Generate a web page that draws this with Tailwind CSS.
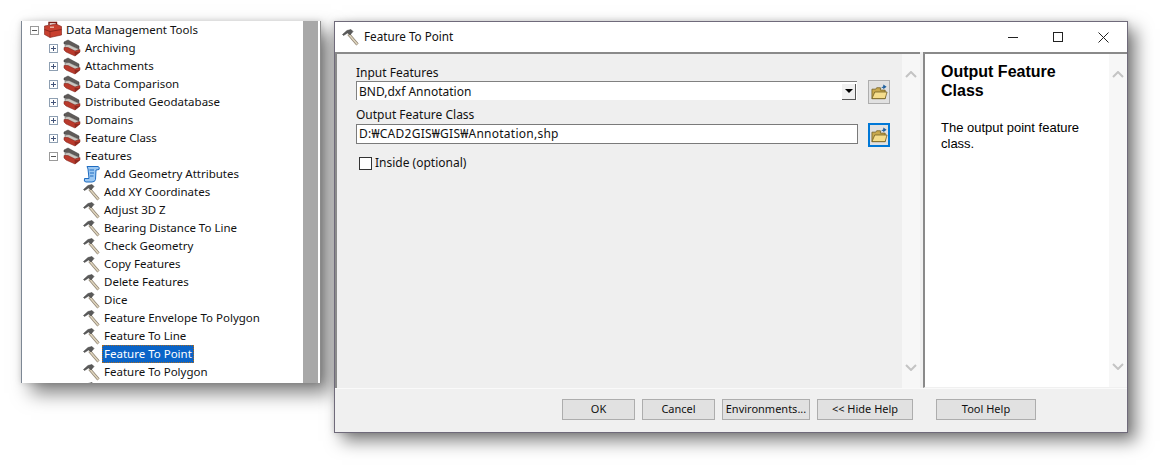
<!DOCTYPE html>
<html lang="en">
<head>
    <meta charset="UTF-8">
    <title>Feature To Point</title>
    <script src="https://cdn.jsdelivr.net/npm/@tailwindcss/browser@4"></script>
</head>
<body class="bg-white w-[1170px] h-[475px] overflow-hidden font-['Noto_Sans',sans-serif] text-[12px] text-[#111]">
    <!-- shared icons -->
    <svg class="hidden">
        <symbol id="hammer" viewBox="0 0 18 18">
            <path d="M6.5 6 L15.5 16.5" stroke="#8f8474" stroke-width="3" fill="none"/>
            <path d="M6.5 6 L15.5 16.5" stroke="#e0d6be" stroke-width="1.5" fill="none"/>
            <path d="M.5 6.5 L5 2.5 L9 1.5 L11 3.5 L8 7 L5.5 5 L1.5 7.5 Z" fill="#5a5a5a" stroke="#3c3c3c" stroke-width=".5"/>
        </symbol>
        <symbol id="toolset" viewBox="0 0 18 18">
            <path d="M1 3 L5 1 L16 7 L16 10 L6 6 L1 5 Z" fill="#5f5a58" stroke="#3a3a3a" stroke-width=".5"/>
            <path d="M2 6 L6 5.5 L16 10.5 L12 12.5 L2 8.5 Z" fill="#c9c6c0" stroke="#555" stroke-width=".5"/>
            <path d="M1 8.5 L5 8.5 L12 12 L17 10.5 L17 13 L12 17 L3 13 L1 11 Z" fill="#b93a2c" stroke="#7c1f16" stroke-width=".5"/>
            <path d="M11.5 13 L12 17 L17 13" fill="#8f2a20"/>
        </symbol>
        <symbol id="toolbox" viewBox="0 0 18 18">
            <path d="M5 4 V1.5 H12.5 V4" fill="none" stroke="#7c1f16" stroke-width="1.4"/>
            <path d="M.5 5 L12 3 L17.5 5.5 L17.5 14 L6 16.5 L.5 13.5 Z" fill="#c8402f" stroke="#7c1f16" stroke-width=".6"/>
            <path d="M.5 8.5 L6 10.5 L17.5 8.5" fill="none" stroke="#7c1f16" stroke-width=".8"/>
            <path d="M6 5.5 H10 V7 H6 Z" fill="#e8b0a0"/>
            <path d="M6 10.5 V16.5" stroke="#8f2a20" stroke-width=".8"/>
        </symbol>
        <symbol id="script" viewBox="0 0 18 18">
            <path d="M4 1.5 H15 Q17 2 16 4.5 L13 5 L12.5 14.5 Q12 17 9 17 H3 Q.5 17 1.5 13.5 H6 L5 4 Z" fill="#9cc8f2" stroke="#1f6cc0" stroke-width="1"/>
            <path d="M6.5 5 H11 M6.8 8 H11 M7 11 H10.5" stroke="#1f6cc0" stroke-width="1.1"/>
        </symbol>
        <symbol id="folder" viewBox="0 0 18 18">
            <path d="M1 6 H5 L6 4.5 H10 V7 H15 V16 H1 Z" fill="#c9a94e" stroke="#6e5a1e" stroke-width=".8"/>
            <path d="M1 16 L4 9 H17 L15 16 Z" fill="#f5dd8c" stroke="#6e5a1e" stroke-width=".8"/>
            <path d="M10.5 5 L13 3 V1 L16.5 3.5 L13 6 V4.5 Z" fill="#1f5f9e"/>
        </symbol>
        <symbol id="plus" viewBox="0 0 9 9">
            <rect x=".5" y=".5" width="8" height="8" fill="#fff" stroke="#8e9fb2"/>
            <path d="M2 4.5 H7 M4.5 2 V7" stroke="#44557a"/>
        </symbol>
        <symbol id="minus" viewBox="0 0 9 9">
            <rect x=".5" y=".5" width="8" height="8" fill="#fff" stroke="#9a9a9a"/>
            <path d="M2 4.5 H7" stroke="#555"/>
        </symbol>
    </svg>

    <div class="flex items-start pl-[21px] pt-[21px] gap-[13px]">
        <!-- catalog tree -->
        <div class="w-[300px] h-[362px] flex bg-white border-l border-[#7d8794] text-[11.5px] shadow-[0_0_6px_rgba(0,0,0,0.15),10px_10px_18px_rgba(0,0,0,0.5)]">
            <div class="flex-1 overflow-hidden">
                <div class="h-[18px] flex items-center pl-[8px]">
                    <svg class="w-[9px] h-[9px] mt-[1px]"><use href="#minus"/></svg>
                    <svg class="w-[18px] h-[18px] ml-[5px]"><use href="#toolbox"/></svg>
                    <span class="ml-[4px]">Data Management Tools</span>
                </div>
                <div class="h-[18px] flex items-center pl-[27px]"><svg class="w-[9px] h-[9px] mt-[1px]"><use href="#plus"/></svg><svg class="w-[18px] h-[18px] ml-[5px]"><use href="#toolset"/></svg><span class="ml-[4px]">Archiving</span></div>
                <div class="h-[18px] flex items-center pl-[27px]"><svg class="w-[9px] h-[9px] mt-[1px]"><use href="#plus"/></svg><svg class="w-[18px] h-[18px] ml-[5px]"><use href="#toolset"/></svg><span class="ml-[4px]">Attachments</span></div>
                <div class="h-[18px] flex items-center pl-[27px]"><svg class="w-[9px] h-[9px] mt-[1px]"><use href="#plus"/></svg><svg class="w-[18px] h-[18px] ml-[5px]"><use href="#toolset"/></svg><span class="ml-[4px]">Data Comparison</span></div>
                <div class="h-[18px] flex items-center pl-[27px]"><svg class="w-[9px] h-[9px] mt-[1px]"><use href="#plus"/></svg><svg class="w-[18px] h-[18px] ml-[5px]"><use href="#toolset"/></svg><span class="ml-[4px]">Distributed Geodatabase</span></div>
                <div class="h-[18px] flex items-center pl-[27px]"><svg class="w-[9px] h-[9px] mt-[1px]"><use href="#plus"/></svg><svg class="w-[18px] h-[18px] ml-[5px]"><use href="#toolset"/></svg><span class="ml-[4px]">Domains</span></div>
                <div class="h-[18px] flex items-center pl-[27px]"><svg class="w-[9px] h-[9px] mt-[1px]"><use href="#plus"/></svg><svg class="w-[18px] h-[18px] ml-[5px]"><use href="#toolset"/></svg><span class="ml-[4px]">Feature Class</span></div>
                <div class="h-[18px] flex items-center pl-[27px]"><svg class="w-[9px] h-[9px] mt-[1px]"><use href="#minus"/></svg><svg class="w-[18px] h-[18px] ml-[5px]"><use href="#toolset"/></svg><span class="ml-[4px]">Features</span></div>
                <div class="h-[18px] flex items-center pl-[61px]"><svg class="w-[18px] h-[18px]"><use href="#script"/></svg><span class="ml-[3px]">Add Geometry Attributes</span></div>
                <div class="h-[18px] flex items-center pl-[61px]"><svg class="w-[18px] h-[18px]"><use href="#hammer"/></svg><span class="ml-[3px]">Add XY Coordinates</span></div>
                <div class="h-[18px] flex items-center pl-[61px]"><svg class="w-[18px] h-[18px]"><use href="#hammer"/></svg><span class="ml-[3px]">Adjust 3D Z</span></div>
                <div class="h-[18px] flex items-center pl-[61px]"><svg class="w-[18px] h-[18px]"><use href="#hammer"/></svg><span class="ml-[3px]">Bearing Distance To Line</span></div>
                <div class="h-[18px] flex items-center pl-[61px]"><svg class="w-[18px] h-[18px]"><use href="#hammer"/></svg><span class="ml-[3px]">Check Geometry</span></div>
                <div class="h-[18px] flex items-center pl-[61px]"><svg class="w-[18px] h-[18px]"><use href="#hammer"/></svg><span class="ml-[3px]">Copy Features</span></div>
                <div class="h-[18px] flex items-center pl-[61px]"><svg class="w-[18px] h-[18px]"><use href="#hammer"/></svg><span class="ml-[3px]">Delete Features</span></div>
                <div class="h-[18px] flex items-center pl-[61px]"><svg class="w-[18px] h-[18px]"><use href="#hammer"/></svg><span class="ml-[3px]">Dice</span></div>
                <div class="h-[18px] flex items-center pl-[61px]"><svg class="w-[18px] h-[18px]"><use href="#hammer"/></svg><span class="ml-[3px]">Feature Envelope To Polygon</span></div>
                <div class="h-[18px] flex items-center pl-[61px]"><svg class="w-[18px] h-[18px]"><use href="#hammer"/></svg><span class="ml-[3px]">Feature To Line</span></div>
                <div class="h-[18px] flex items-center pl-[61px]"><svg class="w-[18px] h-[18px]"><use href="#hammer"/></svg><span class="ml-[1px] px-[1px] h-[18px] flex items-center bg-[#0a64c8] text-white border border-dotted border-[#a86a20]">Feature To Point</span></div>
                <div class="h-[18px] flex items-center pl-[61px]"><svg class="w-[18px] h-[18px]"><use href="#hammer"/></svg><span class="ml-[3px]">Feature To Polygon</span></div>
                <div class="h-[18px] flex items-center pl-[61px]"><svg class="w-[18px] h-[18px]"><use href="#hammer"/></svg></div>
            </div>
            <div class="w-[15px] bg-[#a8a8a8]"></div>
            <div class="w-[2px] bg-white"></div>
            <div class="w-[1px] bg-[#8c8c8c]"></div>
        </div>

        <!-- tool dialog -->
        <div class="w-[794px] h-[412px] flex flex-col bg-[#f0f0f0] border border-[#6f6a7a] shadow-[0_0_6px_rgba(0,0,0,0.15),8px_8px_16px_rgba(0,0,0,0.5)]">
            <div class="h-[30px] flex items-center bg-white pl-[7px]">
                <svg class="w-[18px] h-[18px]"><use href="#hammer"/></svg>
                <span class="ml-[4px] text-[11.7px]">Feature To Point</span>
                <div class="ml-auto flex items-center pr-[18px] gap-[35px]">
                    <div class="w-[10px] h-[1px] bg-[#222]"></div>
                    <div class="w-[10px] h-[10px] border border-[#222]"></div>
                    <svg class="w-[11px] h-[11px]" viewBox="0 0 11 11"><path d="M.5 .5 L10.5 10.5 M10.5 .5 L.5 10.5" stroke="#222" fill="none"/></svg>
                </div>
            </div>

            <div class="flex h-[336px]">
                <!-- parameters -->
                <div class="w-[585px] flex border-t-2 border-l-2 border-[#8a8a8a]">
                    <div class="w-[565px] flex flex-col bg-[#efefef] pl-[19px] pt-[10px]">
                        <div class="h-[18px] flex items-center">Input Features</div>
                        <div class="flex items-start h-[24px] -mt-[1px]">
                            <div class="w-[501px] h-[19px] flex items-center bg-white border-t border-l border-[#808080] pl-[2px] pt-[1px]">
                                BND,dxf Annotation
                                <div class="ml-auto mr-[1px] w-[14px] h-[16px] flex items-center justify-center bg-[#f0f0f0] border-r border-b border-[#555]">
                                    <div class="w-0 h-0 border-l-[4px] border-r-[4px] border-t-[4px] border-l-transparent border-r-transparent border-t-black"></div>
                                </div>
                            </div>
                            <div class="w-[22px] h-[24px] -mt-[1px] ml-[11px] flex items-center justify-center bg-[#e1e1e1] border border-[#adadad]">
                                <svg class="w-[17px] h-[18px]"><use href="#folder"/></svg>
                            </div>
                        </div>
                        <div class="h-[18px] mt-[1px] flex items-center">Output Feature Class</div>
                        <div class="flex items-start h-[24px]">
                            <div class="w-[502px] h-[20px] flex items-center bg-white border border-[#7a7a7a] pl-[2px] tracking-[0.25px]">D:₩CAD2GIS₩GIS₩Annotation,shp</div>
                            <div class="w-[22px] h-[24px] -mt-[1px] ml-[10px] flex items-center justify-center bg-[#e1e1e1] border-2 border-[#0078d7]">
                                <svg class="w-[17px] h-[18px]"><use href="#folder"/></svg>
                            </div>
                        </div>
                        <div class="flex items-center mt-[6px] ml-[3px]">
                            <div class="w-[13px] h-[13px] bg-white border border-[#333]"></div>
                            <span class="ml-[3px]">Inside (optional)</span>
                        </div>
                    </div>
                    <div class="w-[18px] flex flex-col justify-between items-center bg-[#f7f7f7] py-[17px]">
                        <svg class="w-[12px] h-[7px]" viewBox="0 0 12 7"><path d="M1 6 L6 1 L11 6" stroke="#c4c4c4" stroke-width="2" fill="none"/></svg>
                        <svg class="w-[12px] h-[7px]" viewBox="0 0 12 7"><path d="M1 1 L6 6 L11 1" stroke="#c4c4c4" stroke-width="2" fill="none"/></svg>
                    </div>
                </div>
                <!-- help pane -->
                <div class="w-[3px]"></div>
                <div class="flex-1 flex bg-white border-t-2 border-l-2 border-[#8a8a8a] border-b border-b-[#f0f0f0] font-['Liberation_Sans',sans-serif] text-[#000]">
                    <div class="flex-1 pl-[16px] pt-[8px] pr-[20px]">
                        <div class="text-[16px] leading-[19px] font-bold">Output Feature Class</div>
                        <div class="text-[13px] leading-[16px] mt-[20px]">The output point feature class.</div>
                    </div>
                    <div class="w-[18px] flex flex-col justify-between items-center bg-[#f7f7f7] py-[17px]">
                        <svg class="w-[12px] h-[7px]" viewBox="0 0 12 7"><path d="M1 6 L6 1 L11 6" stroke="#c4c4c4" stroke-width="2" fill="none"/></svg>
                        <svg class="w-[12px] h-[7px]" viewBox="0 0 12 7"><path d="M1 1 L6 6 L11 1" stroke="#c4c4c4" stroke-width="2" fill="none"/></svg>
                    </div>
                </div>
            </div>

            <!-- button row -->
            <div class="flex items-start pt-[10px] pl-[227px] gap-[7px] border-t border-[#fafafa] text-[11px]">
                <button class="w-[73px] h-[21px] bg-[#e1e1e1] border border-[#adadad]">OK</button>
                <button class="w-[73px] h-[21px] bg-[#e1e1e1] border border-[#adadad]">Cancel</button>
                <button class="w-[88px] h-[21px] bg-[#e1e1e1] border border-[#adadad]">Environments...</button>
                <button class="w-[96px] h-[21px] bg-[#e1e1e1] border border-[#adadad]">&lt;&lt; Hide Help</button>
                <button class="w-[100px] h-[21px] ml-[16px] bg-[#e1e1e1] border border-[#adadad]">Tool Help</button>
            </div>
        </div>
    </div>
</body>
</html>
